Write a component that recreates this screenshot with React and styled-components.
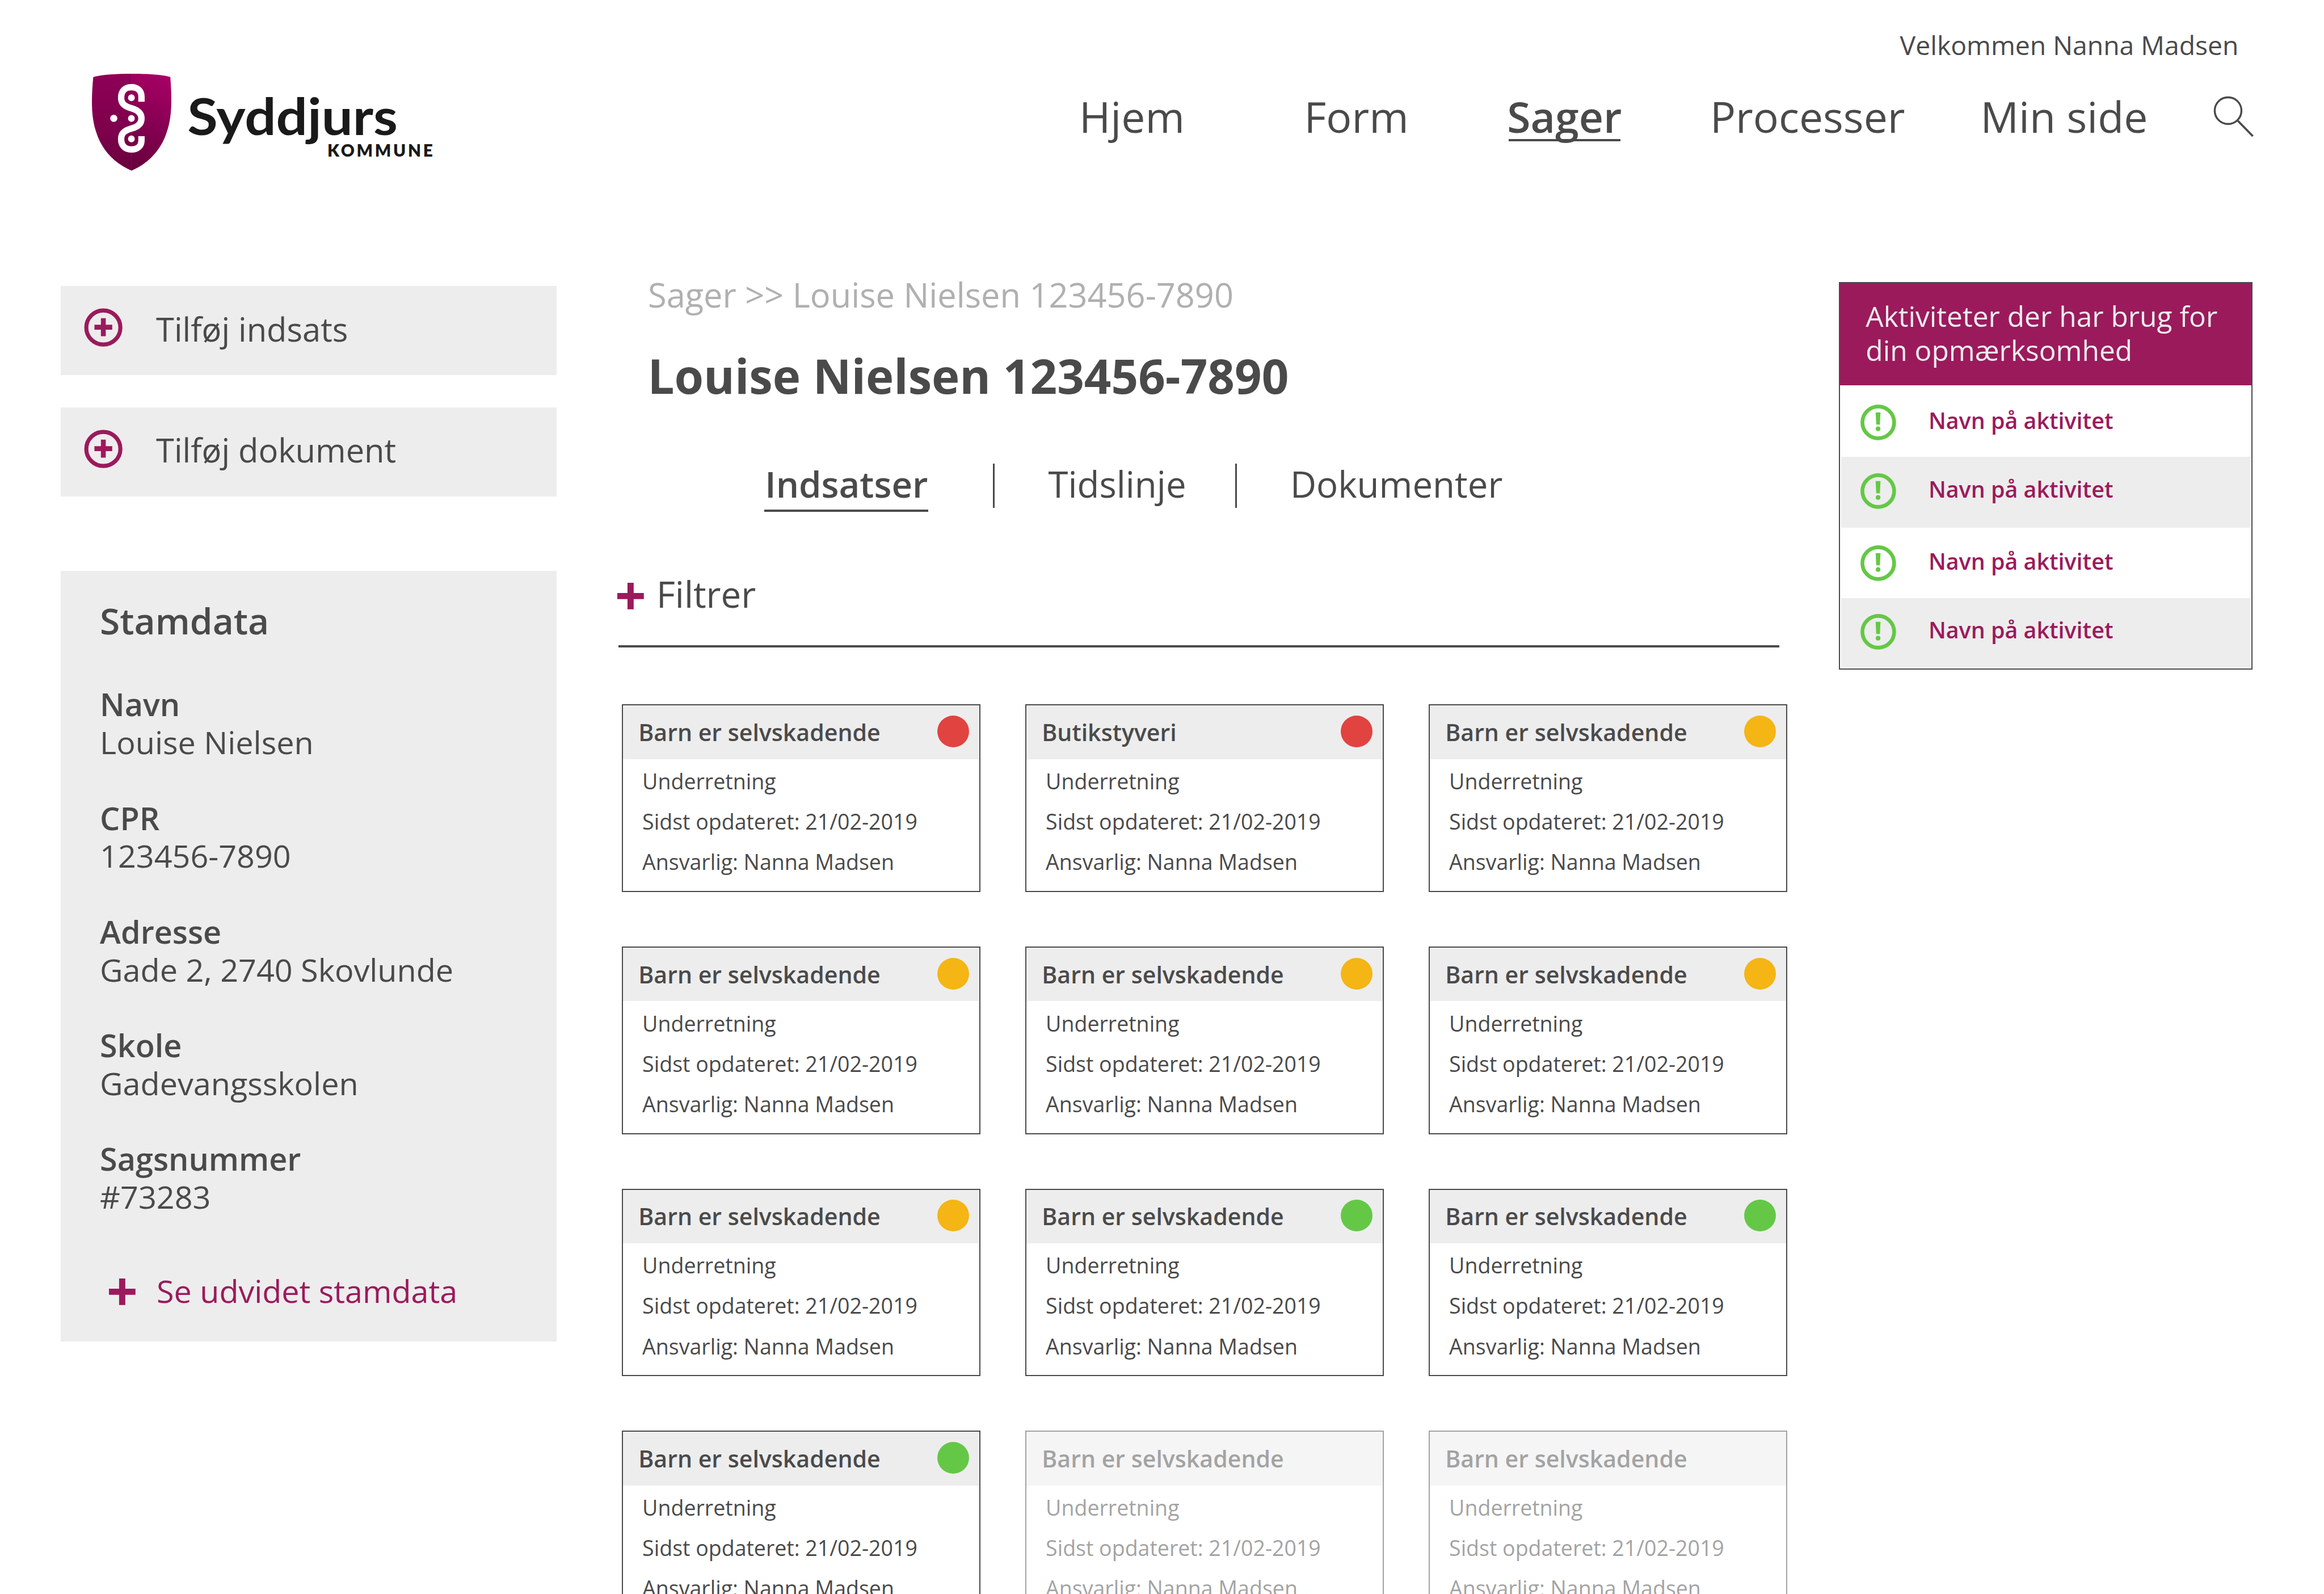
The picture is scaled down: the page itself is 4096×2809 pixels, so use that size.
import React from 'react';
import styled, { createGlobalStyle } from 'styled-components';

const ink = '#4a4a4a';
const magenta = '#9b1a5c';
const grey = '#ededed';
const status = { red: '#e14340', amber: '#f4b515', green: '#64c846' };

/* 1rem is one unit of the 1200-unit wide layout grid */
const GlobalStyle = createGlobalStyle`
  *, *::before, *::after { box-sizing: border-box; }
  html { font-size: calc(100vw / 1200); overflow: hidden; background: #fff; }
  body { margin: 0; color: ${ink}; font-family: 'Open Sans', 'Noto Sans', sans-serif; font-size: 11rem; }
  svg { display: block; flex: none; }
  h1, h2, h3, p, dl, dt, dd, ul { margin: 0; padding: 0; font-size: inherit; font-weight: inherit; list-style: none; }
`;

const Page = styled.div`
  width: 100vw;
  height: 100vh;
  overflow: hidden;
  white-space: nowrap;
`;

const Header = styled.header`
  display: flex;
  justify-content: space-between;
  height: 130rem;
`;

const LogoSvg = styled.svg`
  width: 190rem;
  height: 65rem;
  margin: 30rem 0 0 39.7rem;
`;

const HeaderRight = styled.div`
  padding-top: 13.6rem;
  width: 642.8rem;
`;

const Welcome = styled.p`
  padding-right: 44.1rem;
  text-align: right;
  font-size: 13.57rem;
  line-height: 20rem;
`;

const Nav = styled.nav`
  display: flex;
  margin-top: 11.4rem;
  font-size: 22rem;
  line-height: 30rem;
`;

const NavCell = styled.div`
  width: ${(p) => p.$width}rem;
  flex: none;
`;

const NavLink = styled.a`
  position: relative;
  font-weight: ${(p) => (p.$active ? 600 : 400)};
  &::after {
    content: '';
    display: ${(p) => (p.$active ? 'block' : 'none')};
    position: absolute;
    left: 0.9rem;
    right: 0.8rem;
    bottom: 2rem;
    height: 1.1rem;
    background: ${ink};
  }
`;

const SearchSvg = styled.svg`
  width: 22rem;
  height: 23rem;
  margin-top: 3.9rem;
`;

const Main = styled.main`
  display: flex;
  align-items: flex-start;
`;

const Sidebar = styled.aside`
  width: 256.2rem;
  margin-left: 31.3rem;
  padding-top: 17.8rem;
  flex: none;
`;

const Actions = styled.div`
  display: flex;
  flex-direction: column;
  gap: 16.55rem;
`;

const Action = styled.div`
  display: flex;
  height: 45.95rem;
  padding-left: 12.1rem;
  background: ${grey};
`;

const ActionSvg = styled.svg`
  width: 20rem;
  height: 20rem;
  margin-top: 11.4rem;
`;

const ActionLabel = styled.span`
  margin: 10rem 0 0 17.2rem;
  font-size: 16.95rem;
  line-height: 24rem;
`;

const MasterData = styled.section`
  height: 397.9rem;
  margin-top: 38.5rem;
  padding: 13rem 0 0 20.3rem;
  background: ${grey};
`;

const MasterTitle = styled.h2`
  font-size: 18.75rem;
  font-weight: 600;
  line-height: 26rem;
`;

const Fields = styled.dl`
  display: flex;
  flex-direction: column;
  gap: 19.53rem;
  margin-top: 20rem;
  font-size: 16.33rem;
  line-height: 19.57rem;
  dt { font-weight: 600; }
`;

const MoreLink = styled.a`
  display: flex;
  margin-top: 26.9rem;
  padding-left: 4.6rem;
  color: ${magenta};
  font-size: 16.3rem;
  line-height: 24rem;
  gap: 11rem;
`;

const PlusSvg = styled.svg`
  width: 13.7rem;
  height: 13.7rem;
  margin-top: ${(p) => p.$top}rem;
`;

const Content = styled.section`
  width: 630.8rem;
  margin-left: 31.3rem;
  padding-top: 10.1rem;
  flex: none;
`;

const Breadcrumb = styled.p`
  margin-left: 15.8rem;
  color: #b0b0b0;
  font-size: 17.44rem;
  line-height: 24rem;
`;

const Title = styled.h1`
  margin: 13rem 0 0 15.6rem;
  font-size: 24.43rem;
  font-weight: 700;
  line-height: 34rem;
`;

const Tabs = styled.div`
  display: flex;
  margin: 23.8rem 0 0 76.2rem;
  font-size: 18.62rem;
  line-height: 30rem;
`;

const TabCell = styled.div`
  width: ${(p) => p.$width}rem;
  flex: none;
`;

const TabLink = styled(NavLink)`
  &::after {
    left: -0.3rem;
    right: -0.3rem;
    bottom: -1.7rem;
  }
`;

const TabDivider = styled.span`
  width: 0.9rem;
  height: 22.8rem;
  margin: 4.6rem 27.6rem 0 0;
  background: ${ink};
`;

const Filter = styled.div`
  display: flex;
  gap: 6.5rem;
  margin-top: 26.9rem;
  font-size: 18.62rem;
  line-height: 30rem;
`;

const Rule = styled.div`
  width: 599.5rem;
  height: 1.2rem;
  margin: 11.2rem 0 0 0.5rem;
  background: ${ink};
`;

const CardGrid = styled.div`
  display: grid;
  grid-template-columns: repeat(3, 185rem);
  grid-auto-rows: 96.9rem;
  gap: 28.1rem 23.3rem;
  margin: 29.5rem 0 0 2.4rem;
`;

const CardBox = styled.article`
  border: 0.6rem solid ${ink};
  opacity: ${(p) => (p.$faded ? 0.5 : 1)};
`;

const CardHead = styled.div`
  display: flex;
  justify-content: space-between;
  height: 27.6rem;
  padding: 5.2rem 5.2rem 0 7.9rem;
  background: ${grey};
`;

const CardTitle = styled.h3`
  font-size: 12.04rem;
  font-weight: 600;
  line-height: 17rem;
`;

const Dot = styled.span`
  width: 16.4rem;
  height: 16.4rem;
  border-radius: 50%;
  background: ${(p) => status[p.$status]};
`;

const CardBody = styled.div`
  padding: 1rem 0 0 9.9rem;
  font-size: 11rem;
  line-height: 20.85rem;
`;

const Panel = styled.aside`
  width: 213.6rem;
  height: 200rem;
  margin-top: 15.7rem;
  border: 0.6rem solid ${ink};
  flex: none;
`;

const PanelHead = styled.h2`
  height: 52.7rem;
  padding: 8.1rem 0 0 13.2rem;
  background: ${magenta};
  color: ${grey};
  font-size: 14.55rem;
  line-height: 17.6rem;
`;

const Activity = styled.li`
  display: flex;
  align-items: flex-start;
  height: ${(p) => p.$height}rem;
  padding: ${(p) => p.$top}rem 0 0 10.2rem;
  margin: 0 0.4rem;
  background: ${(p) => (p.$striped ? grey : 'transparent')};
  color: ${magenta};
  font-size: 11.55rem;
  font-weight: 600;
  line-height: 16rem;
`;

const AlertSvg = styled.svg`
  width: 18.4rem;
  height: 18.4rem;
  margin-right: 16.6rem;
`;

function Logo() {
  return (
    <LogoSvg viewBox="40 30 190 65">
      <defs>
        <linearGradient id="shieldRight" x1="0.6" y1="0" x2="0.4" y2="1">
          <stop offset="0" stopColor="#a60064" />
          <stop offset="0.5" stopColor="#860052" />
          <stop offset="1" stopColor="#6a003e" />
        </linearGradient>
        <linearGradient id="shieldLeft" x1="0" y1="0" x2="0" y2="1">
          <stop offset="0" stopColor="#8e0056" />
          <stop offset="0.6" stopColor="#7d004b" />
          <stop offset="1" stopColor="#68003d" />
        </linearGradient>
      </defs>
      <path fill="url(#shieldRight)" d="M68 38.2C76 38.2 83.5 38.6 88.1 39.9C89 52 89 61 86.1 68.8C83 78 76.5 84.6 68 88.2Z" />
      <path fill="url(#shieldLeft)" d="M68.1 38.2C60 38.2 52.8 38.6 48.3 39.9C47.2 52 47.2 61 50 68.8C53 78 59.5 84.6 68.1 88.2Z" />
      <path
        fill="none"
        stroke="#fff"
        strokeWidth="3.3"
        d="M73.2 52.6V50C73.2 46.9 71 45.1 68 45.1C64.6 45.1 62.7 47.3 62.7 50.6C62.7 54 65 55.2 68 56C71.2 56.9 73.2 58.4 73.2 61.3C73.2 64.2 71.2 65.7 68 66.5C65 67.3 62.7 68.6 62.7 71.8C62.7 75.2 64.6 77.3 68 77.3C71 77.3 73.2 75.6 73.2 72.6V70.4"
      />
      <g fill="#fff">
        <circle cx="68" cy="50.6" r="1.75" />
        <circle cx="68" cy="61.3" r="1.75" />
        <circle cx="68" cy="71.8" r="1.75" />
        <circle cx="58.9" cy="61.2" r="1.85" />
      </g>
      <g fill="#1a1a1a" fontFamily="Lato, sans-serif" fontWeight="700">
        <text x="96.9" y="69.9" fontSize="26.6" textLength="108.6" lengthAdjust="spacingAndGlyphs">Syddjurs</text>
        <text x="169.2" y="81" fontSize="8.7" fontWeight="800" textLength="54.4" lengthAdjust="spacing">KOMMUNE</text>
      </g>
    </LogoSvg>
  );
}

const Search = () => (
  <SearchSvg viewBox="1143 49 22 23" fill="none" stroke={ink}>
    <circle cx="1150.6" cy="57.2" r="6.9" strokeWidth="1" />
    <path d="M1155.4 62.2L1163.4 70.4" strokeWidth="1.1" />
  </SearchSvg>
);

const Plus = ({ top }) => (
  <PlusSvg $top={top} viewBox="0 0 13.7 13.7" fill={magenta}>
    <path d="M5.25 0h3.2v5.25h5.25v3.2H8.45v5.25h-3.2V8.45H0v-3.2h5.25z" />
  </PlusSvg>
);

const CirclePlus = () => (
  <ActionSvg viewBox="0 0 20 20" fill="none" stroke={magenta}>
    <circle cx="10" cy="10" r="8.8" strokeWidth="2.1" />
    <path d="M10 5.2v9.3M5.4 9.85h9.2" strokeWidth="2.5" />
  </ActionSvg>
);

const Alert = () => (
  <AlertSvg viewBox="0 0 18.4 18.4" fill={status.green}>
    <circle cx="9.2" cy="9.2" r="8.2" fill="none" stroke={status.green} strokeWidth="1.95" />
    <path d="M7.85 4h2.5l-.3 6.3H8.15z" />
    <circle cx="9.1" cy="12.5" r="1.2" />
  </AlertSvg>
);

const navItems = [
  { label: 'Hjem', width: 116.2 },
  { label: 'Form', width: 104.8 },
  { label: 'Sager', width: 104.8, active: true },
  { label: 'Processer', width: 139.6 },
  { label: 'Min side', width: 120.4 },
];

const fields = [
  ['Navn', 'Louise Nielsen'],
  ['CPR', '123456-7890'],
  ['Adresse', 'Gade 2, 2740 Skovlunde'],
  ['Skole', 'Gadevangsskolen'],
  ['Sagsnummer', '#73283'],
];

const cards = [
  { status: 'red' },
  { title: 'Butikstyveri', status: 'red' },
  { status: 'amber' },
  { status: 'amber' },
  { status: 'amber' },
  { status: 'amber' },
  { status: 'amber' },
  { status: 'green' },
  { status: 'green' },
  { status: 'green' },
  { faded: true },
  { faded: true },
];

const activities = [
  { height: 37, top: 10 },
  { height: 36.35, top: 8.35, striped: true },
  { height: 36.4, top: 9.3 },
  { height: 36.2, top: 8.3, striped: true },
];

const ActivityLabel = styled.span`
  margin-top: 0.3rem;
`;

function Card({ title = 'Barn er selvskadende', status: level, faded }) {
  return (
    <CardBox $faded={faded}>
      <CardHead>
        <CardTitle>{title}</CardTitle>
        {level && <Dot $status={level} />}
      </CardHead>
      <CardBody>
        <p>Underretning</p>
        <p>Sidst opdateret: 21/02-2019</p>
        <p>Ansvarlig: Nanna Madsen</p>
      </CardBody>
    </CardBox>
  );
}

export default function App() {
  return (
    <Page>
      <GlobalStyle />
      <Header>
        <Logo />
        <HeaderRight>
          <Welcome>Velkommen Nanna Madsen</Welcome>
          <Nav>
            {navItems.map((item) => (
              <NavCell key={item.label} $width={item.width}>
                <NavLink $active={item.active}>{item.label}</NavLink>
              </NavCell>
            ))}
            <Search />
          </Nav>
        </HeaderRight>
      </Header>
      <Main>
        <Sidebar>
          <Actions>
            {['Tilføj indsats', 'Tilføj dokument'].map((label) => (
              <Action key={label}>
                <CirclePlus />
                <ActionLabel>{label}</ActionLabel>
              </Action>
            ))}
          </Actions>
          <MasterData>
            <MasterTitle>Stamdata</MasterTitle>
            <Fields>
              {fields.map(([name, value]) => (
                <div key={name}>
                  <dt>{name}</dt>
                  <dd>{value}</dd>
                </div>
              ))}
            </Fields>
            <MoreLink>
              <Plus top={5.7} />
              Se udvidet stamdata
            </MoreLink>
          </MasterData>
        </Sidebar>
        <Content>
          <Breadcrumb>Sager &gt;&gt; Louise Nielsen 123456-7890</Breadcrumb>
          <Title>Louise Nielsen 123456-7890</Title>
          <Tabs>
            <TabCell $width={117.8}>
              <TabLink $active>Indsatser</TabLink>
            </TabCell>
            <TabDivider />
            <TabCell $width={96.4}>
              <TabLink>Tidslinje</TabLink>
            </TabCell>
            <TabDivider />
            <TabLink>Dokumenter</TabLink>
          </Tabs>
          <Filter>
            <Plus top={9.1} />
            Filtrer
          </Filter>
          <Rule />
          <CardGrid>
            {cards.map((card, i) => (
              <Card key={i} {...card} />
            ))}
          </CardGrid>
        </Content>
        <Panel>
          <PanelHead>
            Aktiviteter der har brug for
            <br />
            din opmærksomhed
          </PanelHead>
          <ul>
            {activities.map((a, i) => (
              <Activity key={i} $height={a.height} $top={a.top} $striped={a.striped}>
                <Alert />
                <ActivityLabel>Navn på aktivitet</ActivityLabel>
              </Activity>
            ))}
          </ul>
        </Panel>
      </Main>
    </Page>
  );
}
